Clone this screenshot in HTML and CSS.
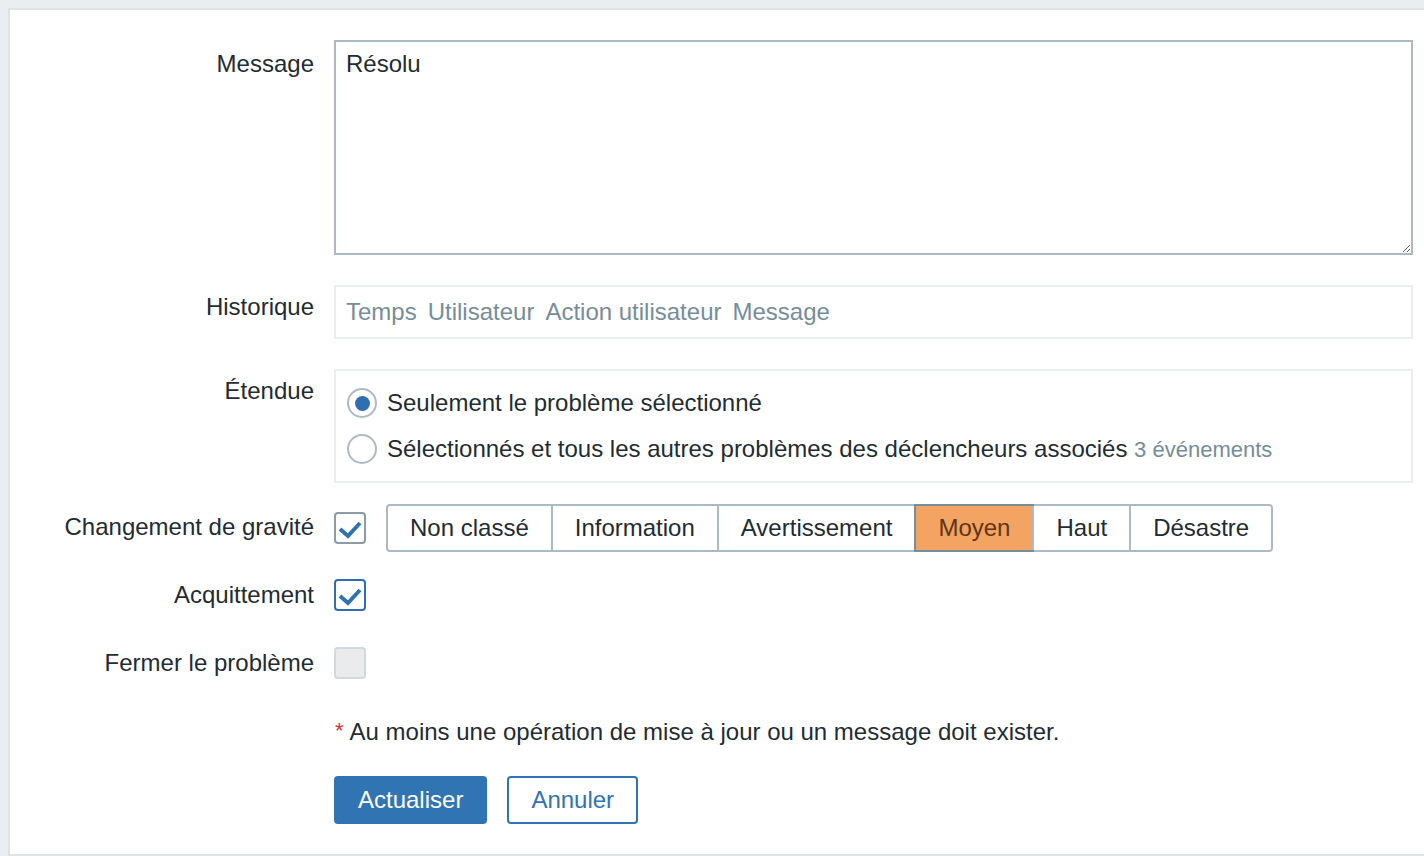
FILE: index.html
```html
<!DOCTYPE html>
<html lang="fr">
<head>
<meta charset="utf-8">
<title>Mise à jour du problème</title>
<link rel="stylesheet" href="styles.css">
</head>
<body>
<div class="panel">
  <div class="row row-message">
    <div class="label">Message</div>
    <div class="field"><textarea class="textarea">Résolu</textarea></div>
  </div>

  <div class="row row-history">
    <div class="label label-up">Historique</div>
    <div class="field">
      <div class="history">
        <span>Temps</span><span>Utilisateur</span><span>Action utilisateur</span><span>Message</span>
      </div>
    </div>
  </div>

  <div class="row row-scope">
    <div class="label label-up">Étendue</div>
    <div class="field">
      <div class="scope">
        <div class="radio-line"><span class="radio checked"></span><span>Seulement le problème sélectionné</span></div>
        <div class="radio-line"><span class="radio"></span><span>Sélectionnés et tous les autres problèmes des déclencheurs associés <span class="muted">3 événements</span></span></div>
      </div>
    </div>
  </div>

  <div class="row row-std">
    <div class="label">Changement de gravité</div>
    <div class="field inline">
      <span class="checkbox checked"><svg viewBox="0 0 32 32" width="32" height="32"><path d="M6 17 L14 24 L26 11" fill="none" stroke="#2f73b3" stroke-width="4" stroke-linejoin="miter" stroke-linecap="butt"/></svg></span>
      <div class="severity">
        <span class="sev">Non classé</span>
        <span class="sev">Information</span>
        <span class="sev">Avertissement</span>
        <span class="sev selected">Moyen</span>
        <span class="sev">Haut</span>
        <span class="sev">Désastre</span>
      </div>
    </div>
  </div>

  <div class="row row-std">
    <div class="label">Acquittement</div>
    <div class="field inline">
      <span class="checkbox checked focused"><svg viewBox="0 0 32 32" width="32" height="32"><path d="M6 17 L14 24 L26 11" fill="none" stroke="#2f73b3" stroke-width="4" stroke-linejoin="miter" stroke-linecap="butt"/></svg></span>
    </div>
  </div>

  <div class="row row-std">
    <div class="label">Fermer le problème</div>
    <div class="field inline">
      <span class="checkbox disabled"></span>
    </div>
  </div>

  <div class="row row-std">
    <div class="label"></div>
    <div class="field inline note"><span class="asterisk">*</span>Au moins une opération de mise à jour ou un message doit exister.</div>
  </div>

  <div class="row row-std">
    <div class="label"></div>
    <div class="field inline buttons">
      <button class="btn primary">Actualiser</button>
      <button class="btn secondary">Annuler</button>
    </div>
  </div>
</div>
</body>
</html>
```

FILE: styles.css
```css
html, body {
  margin: 0;
  padding: 0;
  background: #ebeef0;
  font-family: "Liberation Sans", Arial, sans-serif;
  font-size: 24px;
  color: #1f2c33;
}

.panel {
  box-sizing: border-box;
  margin: 8px 0 0 8px;
  height: 848px;
  background: #ffffff;
  border: 2px solid #dde3e6;
  border-right: none;
  padding-top: 30px;
  overflow: hidden;
}

.row {
  display: grid;
  grid-template-columns: 304px 1079px;
  column-gap: 20px;
}

.label {
  text-align: right;
  padding-top: 10px;
  line-height: 28px;
  white-space: nowrap;
}

.label.label-up { padding-top: 8px; }

.row-message { margin-bottom: 30px; }
.row-history { margin-bottom: 30px; }
.row-scope { margin-bottom: 20px; }
.row-std { height: 48px; margin-bottom: 20px; }

.textarea {
  display: block;
  box-sizing: border-box;
  width: 1079px;
  height: 215px;
  margin: 0;
  border: 2px solid #acbbc3;
  border-radius: 0;
  padding: 8px 10px;
  font-family: inherit;
  font-size: 24px;
  line-height: 28px;
  color: #1f2c33;
  resize: vertical;
  outline: none;
}

.history {
  box-sizing: border-box;
  height: 54px;
  border: 2px solid #ebeef0;
  padding: 0 10px;
  display: flex;
  align-items: center;
  gap: 11px;
  color: #768d99;
}

.scope {
  box-sizing: border-box;
  height: 114px;
  border: 2px solid #ebeef0;
  padding: 9px 10px 9px 11px;
}

.radio-line {
  height: 46px;
  display: flex;
  align-items: center;
  gap: 10px;
  white-space: nowrap;
}

.radio {
  box-sizing: border-box;
  flex: none;
  width: 30px;
  height: 30px;
  border: 2px solid #acbbc3;
  border-radius: 50%;
  background: #fff;
  display: flex;
  align-items: center;
  justify-content: center;
}

.radio.checked::before {
  content: "";
  width: 15px;
  height: 15px;
  border-radius: 50%;
  background: #2f6fb0;
}

.muted {
  color: #768d99;
  font-size: 22px;
}

.field.inline {
  display: flex;
  align-items: center;
  gap: 20px;
}

.checkbox {
  box-sizing: border-box;
  flex: none;
  width: 32px;
  height: 32px;
  border: 2px solid #8a9ca6;
  border-radius: 4px;
  background: #fff;
  display: flex;
  align-items: center;
  justify-content: center;
}

.checkbox svg { display: block; margin: -2px; }

.checkbox.focused { border-color: #2f6fb0; }

.checkbox.disabled {
  background: #ebebeb;
  border-color: #d2d9dc;
}

.severity {
  box-sizing: border-box;
  display: flex;
  height: 48px;
  margin-top: 1px;
  border: 2px solid #acbbc3;
  border-radius: 4px;
  background: #fff;
}

.sev {
  position: relative;
  padding: 0 22px;
  line-height: 44px;
  border-left: 2px solid #acbbc3;
  white-space: nowrap;
}

.sev:first-child { border-left: none; }

.sev.selected {
  background: #f4a462;
  color: #5e3413;
  border-left-color: #7b8f9a;
}

.sev.selected::after {
  content: "";
  position: absolute;
  top: -2px;
  bottom: -2px;
  left: -2px;
  right: -2px;
  border: 2px solid #7b8f9a;
  pointer-events: none;
}

.field.inline.note {
  gap: 0;
  white-space: nowrap;
  padding-top: 2px;
}

.asterisk {
  color: #e0302d;
  font-size: 22px;
  line-height: 22px;
  align-self: flex-start;
  margin-top: 11px;
  margin-left: 1px;
  margin-right: 6px;
}

.field.inline.buttons { align-items: flex-start; padding-top: 1px; }

.btn {
  box-sizing: border-box;
  height: 48px;
  padding: 0 22px;
  border-radius: 4px;
  font-family: inherit;
  font-size: 24px;
  cursor: pointer;
}

.btn.primary {
  background: #3174b4;
  border: 2px solid #3174b4;
  color: #ffffff;
}

.btn.secondary {
  background: #ffffff;
  border: 2px solid #3174b4;
  color: #3174b4;
}
```
